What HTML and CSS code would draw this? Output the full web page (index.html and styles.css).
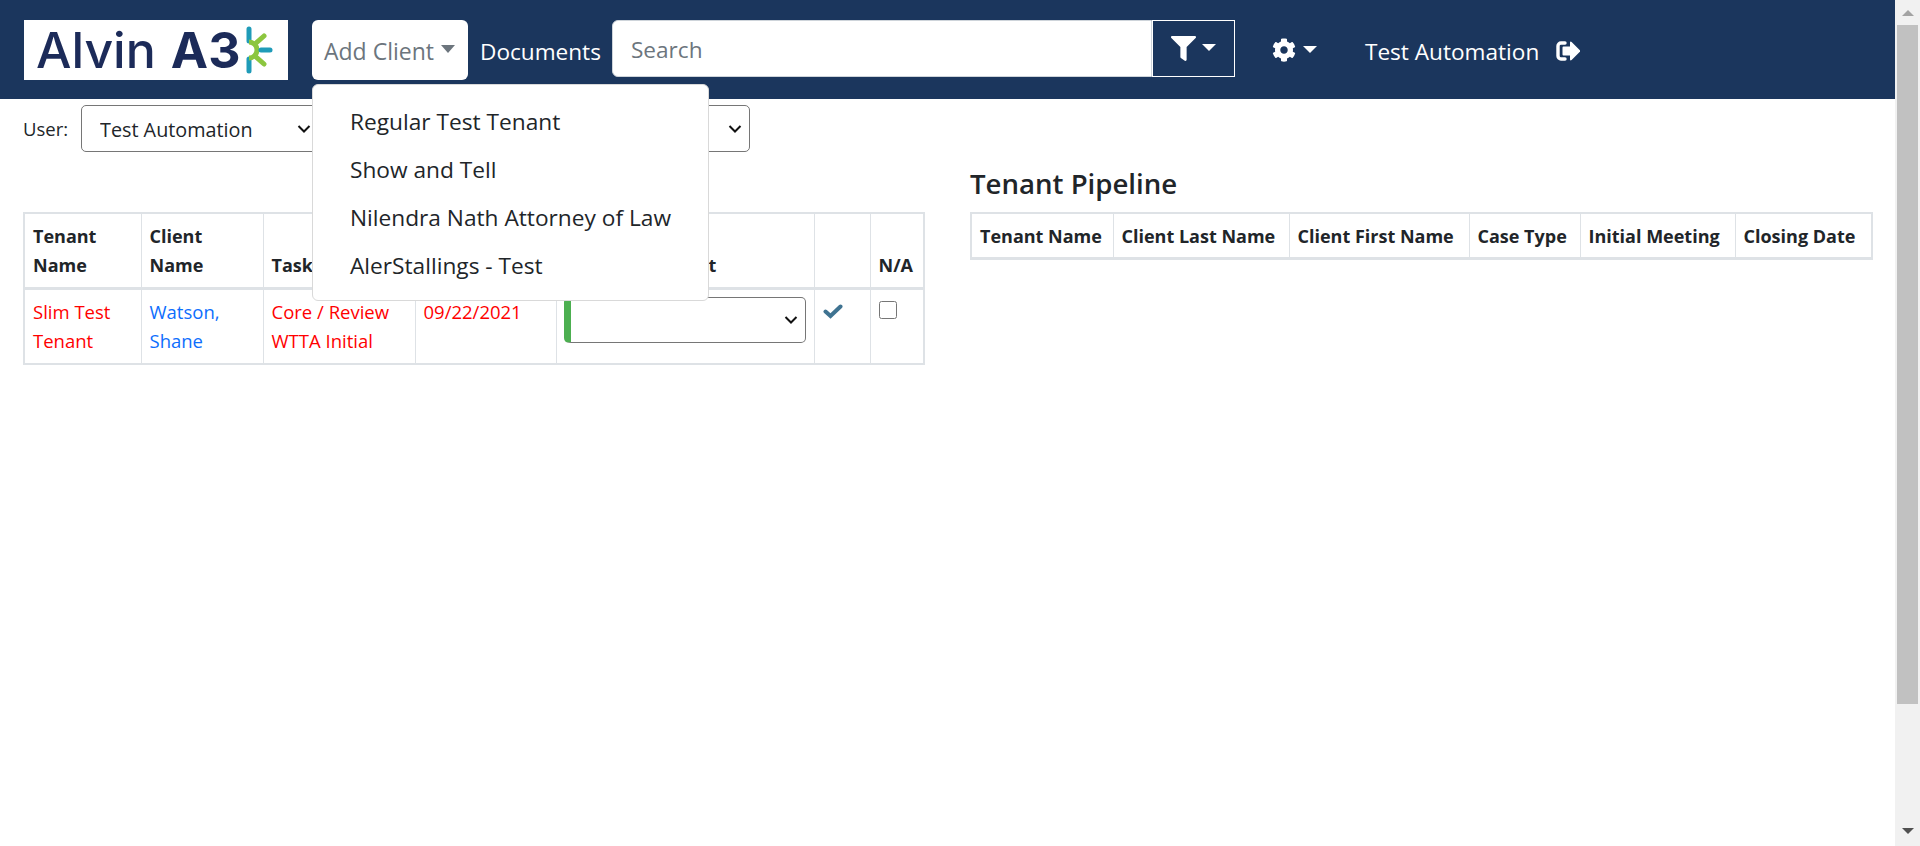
FILE: index.html
```html
<!DOCTYPE html>
<html lang="en">
<head>
  <meta charset="UTF-8" />
  <meta name="viewport" content="width=device-width, initial-scale=1.0"/>
  <title>Alvin A3</title>
  <link rel="stylesheet" href="styles.css">
</head>
<body>
  <div class="window">
    <div class="page">
      <nav class="topbar">
        <a class="logo">
          <span class="logo-thin">Alvin</span><span class="logo-bold">A3</span>
          <svg class="logo-mark" viewBox="0 0 30 48" width="30" height="48">
            <path d="M3 3V15M3 33V45" stroke="#1f9bb8" stroke-width="5" stroke-linecap="round" fill="none"/>
            <path d="M3 16a8 8 0 0 1 0 16" stroke="#8cc63f" stroke-width="5" fill="none"/>
            <path d="M9 18L18 10M9 30L18 38" stroke="#8cc63f" stroke-width="5" stroke-linecap="round" fill="none"/>
            <path d="M15 24H24" stroke="#1f9bb8" stroke-width="5" stroke-linecap="round" fill="none"/>
          </svg>
        </a>

        <div class="add-client">
          <button class="add-btn">Add Client<span class="caret"></span></button>
          <ul class="menu">
            <li>Regular Test Tenant</li>
            <li>Show and Tell</li>
            <li>Nilendra Nath Attorney of Law</li>
            <li>AlerStallings - Test</li>
          </ul>
        </div>

        <a class="nav-link">Documents</a>

        <div class="search">
          <input type="text" class="search-input" placeholder="Search" />
          <button class="filter-btn">
            <svg viewBox="0 0 512 512" width="25" height="25"><path fill="#fff" d="M487.976 0H24.028C2.71 0-8.047 25.866 7.058 40.971L192 225.941V432c0 7.831 3.821 15.17 10.237 19.662l80 55.98C298.02 518.69 320 507.493 320 487.98V225.941l184.947-184.97C520.021 25.896 509.338 0 487.976 0z"/></svg>
            <span class="caret caret-white"></span>
          </button>
        </div>

        <a class="gear">
          <svg viewBox="0 0 512 512" width="24" height="24"><path fill="#fff" d="M487.4 315.7l-42.6-24.6c4.3-23.2 4.3-47 0-70.2l42.6-24.6c4.9-2.8 7.1-8.6 5.5-14-11.1-35.6-30-67.8-54.7-94.6-3.8-4.1-10-5.1-14.8-2.3L380.8 110c-17.9-15.4-38.5-27.3-60.8-35.1V25.8c0-5.6-3.9-10.5-9.4-11.7-36.7-8.2-74.3-7.8-109.2 0-5.5 1.2-9.4 6.1-9.4 11.7V75c-22.2 7.9-42.8 19.8-60.8 35.1L88.7 85.5c-4.9-2.8-11-1.9-14.8 2.3-24.7 26.7-43.6 58.9-54.7 94.6-1.7 5.4.6 11.2 5.5 14L67.3 221c-4.3 23.2-4.3 47 0 70.2l-42.6 24.6c-4.9 2.8-7.1 8.6-5.5 14 11.1 35.6 30 67.8 54.7 94.6 3.8 4.1 10 5.1 14.8 2.3l42.6-24.6c17.9 15.4 38.5 27.3 60.8 35.1v49.2c0 5.6 3.9 10.5 9.4 11.7 36.7 8.2 74.3 7.8 109.2 0 5.5-1.2 9.4-6.1 9.4-11.7v-49.2c22.2-7.9 42.8-19.8 60.8-35.1l42.6 24.6c4.9 2.8 11 1.9 14.8-2.3 24.7-26.7 43.6-58.9 54.7-94.6 1.5-5.5-.7-11.3-5.6-14.1zM256 336c-44.1 0-80-35.9-80-80s35.9-80 80-80 80 35.9 80 80-35.9 80-80 80z"/></svg>
          <span class="caret caret-white"></span>
        </a>

        <a class="nav-link user-name">Test Automation</a>
        <svg class="signout" viewBox="0 0 24 20" width="24" height="20">
          <path d="M9 2H5a3 3 0 0 0-3 3v10a3 3 0 0 0 3 3h4" stroke="#fff" stroke-width="3.4" fill="none" stroke-linecap="round"/>
          <path fill="#fff" d="M14 1.5a1 1 0 0 1 1.6-.6l8 8a1.5 1.5 0 0 1 0 2.2l-8 8a1 1 0 0 1-1.6-.6V14.5H7.5a1 1 0 0 1-1-1v-7a1 1 0 0 1 1-1H14z"/>
        </svg>
      </nav>

      <main class="content">
        <div class="filters">
          <label class="filter-label">User:</label>
          <select class="picker picker-user"><option>Test Automation</option></select>
          <select class="picker picker-other"><option></option></select>
        </div>

        <div class="columns">
          <section class="col-left">
            <table class="grid tasks">
              <thead>
                <tr>
                  <th class="c-tenant">Tenant Name</th>
                  <th class="c-client">Client Name</th>
                  <th class="c-task">Task</th>
                  <th class="c-date">Due Date</th>
                  <th class="c-assign">Task Assignment</th>
                  <th class="c-check"></th>
                  <th class="c-na">N/A</th>
                </tr>
              </thead>
              <tbody>
                <tr>
                  <td class="late">Slim Test Tenant</td>
                  <td class="blue">Watson, Shane</td>
                  <td class="late">Core / Review WTTA Initial</td>
                  <td class="late">09/22/2021</td>
                  <td class="cell-select"><select class="picker picker-green"><option></option></select></td>
                  <td>
                    <svg class="check" viewBox="0 0 20 16" width="20" height="16"><path d="M2.5 8.5l5 4.5L17.5 3.5" stroke="#3f7391" stroke-width="4" stroke-linecap="round" fill="none"/></svg>
                  </td>
                  <td><input type="checkbox" class="na-box" /></td>
                </tr>
              </tbody>
            </table>
          </section>

          <section class="col-right">
            <h2 class="pipeline-title">Tenant Pipeline</h2>
            <table class="grid pipeline">
              <thead>
                <tr>
                  <th class="p1">Tenant Name</th>
                  <th class="p2">Client Last Name</th>
                  <th class="p3">Client First Name</th>
                  <th class="p4">Case Type</th>
                  <th class="p5">Initial Meeting</th>
                  <th class="p6">Closing Date</th>
                </tr>
              </thead>
            </table>
          </section>
        </div>
      </main>
    </div>

    <div class="scrollbar">
      <span class="arrow-up"></span>
      <span class="thumb"></span>
      <span class="arrow-down"></span>
    </div>
  </div>
</body>
</html>
```

FILE: styles.css
```css
html, body {
  margin: 0;
  height: 100%;
  overflow: hidden;
}

body {
  font-family: "Open Sans", "Noto Sans", sans-serif;
  font-size: 18px;
  color: #212529;
  background-color: #fff;
}

.window {
  display: flex;
  height: 846px;
}

.page {
  flex: 1;
  min-width: 0;
}

/* top bar */
.topbar {
  display: flex;
  align-items: flex-start;
  height: 99px;
  box-sizing: border-box;
  padding: 20px 0 0 24px;
  background-color: #1b365d;
}

.logo {
  display: flex;
  align-items: center;
  width: 264px;
  height: 60px;
  box-sizing: border-box;
  padding-left: 12px;
  background-color: #fff;
  color: #1c2b59;
  font-family: "Inter", sans-serif;
  font-size: 50px;
  line-height: 60px;
}

.logo-thin {
  font-weight: 500;
  margin-right: 15px;
}

.logo-bold {
  font-weight: 700;
}

.logo-mark {
  margin-left: 6px;
}

.add-client {
  position: relative;
  margin-left: 24px;
}

.add-btn {
  display: flex;
  align-items: center;
  width: 156px;
  height: 60px;
  padding: 2px 0 0 12px;
  border: none;
  border-radius: 6px;
  background-color: #fff;
  color: #6c757d;
  font: inherit;
  font-size: 23px;
}

.caret {
  display: inline-block;
  margin-left: 7px;
  border-top: 8px solid #6c757d;
  border-left: 7px solid transparent;
  border-right: 7px solid transparent;
  margin-bottom: 4px;
}

.caret-white {
  border-top-color: #fff;
}

.menu {
  position: absolute;
  top: 64px;
  left: 0;
  z-index: 5;
  width: 397px;
  height: 217px;
  box-sizing: border-box;
  margin: 0;
  padding: 13px 0 0 37px;
  list-style: none;
  background-color: #fff;
  border: 1px solid #d9d9d9;
  border-radius: 6px;
  font-size: 22.7px;
}

.menu li {
  height: 48px;
  line-height: 48px;
  white-space: nowrap;
}

.nav-link {
  color: #fff;
  font-size: 22.6px;
  line-height: 63px;
}

.add-client + .nav-link {
  margin-left: 12px;
}

.search {
  display: flex;
  width: 623px;
  height: 57px;
  margin-left: 11px;
}

.search-input {
  flex: 1;
  min-width: 0;
  box-sizing: border-box;
  padding: 2px 18px 0;
  border: 1px solid #ced4da;
  border-radius: 6px 0 0 6px;
  font: inherit;
  font-size: 22.6px;
  color: #495057;
  outline: none;
}

.search-input::placeholder {
  color: #6c757d;
}

.filter-btn {
  display: flex;
  align-items: center;
  justify-content: center;
  width: 83px;
  padding: 0;
  border: 1px solid #fff;
  background-color: #1b365d;
}

.filter-btn .caret {
  border-width: 7px 7px 0;
  margin-left: 6px;
  margin-bottom: 2px;
}

.gear {
  display: flex;
  align-items: center;
  height: 60px;
  margin-left: 37px;
}

.gear .caret {
  border-width: 7px 7px 0;
  margin-left: 7px;
  margin-bottom: 2px;
}

.user-name {
  margin-left: 48px;
}

.signout {
  margin: 21px 0 0 17px;
}

/* filters */
.filters {
  display: flex;
  align-items: center;
  height: 47px;
  margin-top: 6px;
  padding-left: 23px;
}

.filter-label {
  width: 58px;
  font-size: 18.5px;
}

.picker {
  appearance: none;
  box-sizing: border-box;
  height: 47px;
  border: 1px solid #767676;
  border-radius: 5px;
  background: #fff url("data:image/svg+xml,%3Csvg xmlns='http://www.w3.org/2000/svg' viewBox='0 0 14 8'%3E%3Cpath d='M1.5 1L7 6.5 12.5 1' stroke='%23111' stroke-width='2' fill='none'/%3E%3C/svg%3E") no-repeat right 7px center / 14px 8px;
  color: #212529;
  font: inherit;
  font-size: 19.8px;
  padding: 2px 0 0 18px;
}

.picker-user {
  width: 238px;
}

.picker-other {
  width: 431px;
}

.columns {
  display: flex;
  margin-top: 60px;
  padding-left: 23px;
}

.col-left {
  width: 900px;
}

.col-right {
  position: relative;
  width: 901px;
  margin-left: 47px;
}

.pipeline-title {
  position: absolute;
  left: 0;
  top: -49px;
  margin: 0;
  font-size: 27.6px;
  line-height: 40px;
  font-weight: 600;
  color: #212529;
}

/* tables */
.grid {
  width: 100%;
  border-collapse: collapse;
  table-layout: fixed;
  border: 2px solid #dee2e6;
  font-size: 18px;
  line-height: 29px;
}

.grid th, .grid td {
  box-sizing: border-box;
  padding: 8px 8px 7px;
  border: 1px solid #dee2e6;
  text-align: left;
  vertical-align: bottom;
}

.grid thead th {
  border-bottom: 3px solid #dee2e6;
  color: #212529;
}

.tasks tbody td {
  height: 75px;
  padding-top: 7px;
  font-size: 18.5px;
  vertical-align: top;
}

.pipeline th {
  height: 45px;
  padding-top: 4px;
  padding-bottom: 6px;
  white-space: nowrap;
}

.c-tenant { width: 117px; }
.c-client { width: 122px; }
.c-task { width: 152px; }
.c-date { width: 141px; }
.c-assign { width: 258px; }
.c-check { width: 56px; }
.c-na { width: 54px; }

.p1 { width: 142px; }
.p2 { width: 176px; }
.p3 { width: 180px; }
.p4 { width: 111px; }
.p5 { width: 155px; }
.p6 { width: 137px; }

.late {
  color: #ff0000;
}

.blue {
  color: #0d6efd;
}

.tasks tbody .cell-select {
  padding: 7px 8px 6px 7px;
}

.picker-green {
  display: block;
  width: 242px;
  height: 46px;
  margin: 0;
  border-left: 7px solid #4caf50;
}

.check {
  display: block;
  margin: 6px 0 0 0;
}

.na-box {
  display: block;
  width: 18px;
  height: 18px;
  margin: 4px 0 0 0;
}

/* page scrollbar */
.scrollbar {
  display: flex;
  flex-direction: column;
  align-items: center;
  width: 25px;
  background-color: #f1f1f1;
}

.thumb {
  width: 21px;
  height: 679px;
  margin-top: 9px;
  background-color: #c1c1c1;
}

.arrow-up {
  margin-top: 10px;
  border-bottom: 6px solid #a3a3a3;
  border-left: 6px solid transparent;
  border-right: 6px solid transparent;
}

.arrow-down {
  margin-top: 124px;
  border-top: 6px solid #505050;
  border-left: 6px solid transparent;
  border-right: 6px solid transparent;
}
```
